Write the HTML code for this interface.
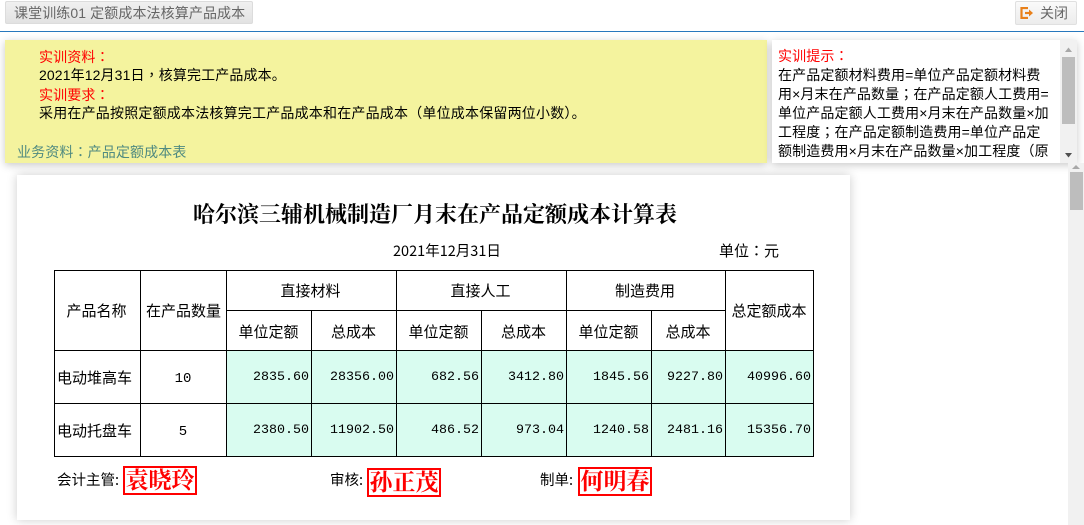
<!DOCTYPE html>
<html lang="zh-CN"><head><meta charset="utf-8">
<style>
html,body{margin:0;padding:0;width:1084px;height:525px;overflow:hidden;background:#fff}
body{position:relative;font-family:"Liberation Sans","WenQuanYi Zen Hei","Noto Sans CJK SC",sans-serif;font-size:14px;color:#000}
.a{position:absolute;white-space:nowrap}
.h{position:absolute;background:#000;height:1px}
.v{position:absolute;background:#000;width:1px}
.c{position:absolute;background:#d9fcf0}
.t{position:absolute;text-align:center;white-space:nowrap;line-height:20px;height:20px;font-family:"WenQuanYi Zen Hei","Noto Sans CJK SC",sans-serif;font-size:15px;color:#000}
.n{position:absolute;text-align:right;white-space:nowrap;line-height:20px;height:20px;font-family:"Liberation Mono","WenQuanYi Zen Hei",monospace;font-size:13.330px;color:#000}
.s{position:absolute;border:2px solid #f00;color:#f00;font-family:"Liberation Serif","Noto Serif CJK SC",serif;font-weight:bold;font-size:23px;line-height:25px;height:25px;width:70px;text-align:center;background:#fff;white-space:nowrap}
.y{line-height:19px;font-size:14px;letter-spacing:.12px}
.p{font-family:"Noto Sans CJK TC",sans-serif;line-height:1}
</style></head><body>

<div class="a" style="left:5px;top:1px;width:248px;height:23px;box-sizing:border-box;border:1px solid #dcdcdc;border-radius:2px;background:linear-gradient(#f0f0f0,#e2e2e2);color:#666;font-size:14px;line-height:22px;padding-left:8px;letter-spacing:.1px">课堂训练01 定额成本法核算产品成本</div>

<div class="a" style="left:1015px;top:1px;width:62px;height:24px;box-sizing:border-box;border:1px solid #e0e0e0;border-radius:2px;background:linear-gradient(#fafafa,#ececec);color:#666;font-size:14px;line-height:22px;padding-left:24px">关闭</div>
<svg class="a" style="left:1020px;top:7px" width="14" height="12" viewBox="0 0 14 12"><path d="M8 1H1.500V11H8" fill="none" stroke="#e8801a" stroke-width="2.200"/><path d="M5 6H10" stroke="#e8801a" stroke-width="2.200"/><path d="M9 2.500L13 6L9 9.500Z" fill="#e8801a"/></svg>

<div class="a" style="left:0;top:31px;width:1084px;height:1px;background:#2878bd"></div>

<div class="a" style="left:5px;top:40px;width:762px;height:123px;background:#f4f39e;box-shadow:0 2px 8px rgba(0,0,0,.22)"></div>
<div class="a y" style="left:39px;top:48px;color:#f00">实训资料<span class="p" lang="zh-TW">：</span></div>
<div class="a y" style="left:39px;top:66px">2021年12月31日<span class="p" lang="zh-TW">，</span>核算完工产品成本。</div>
<div class="a y" style="left:39px;top:86px;color:#f00">实训要求<span class="p" lang="zh-TW">：</span></div>
<div class="a y" style="left:39px;top:104px;letter-spacing:.2px">采用在产品按照定额成本法核算完工产品成本和在产品成本<span class="p" lang="zh-TW">（</span>单位成本保留两位小数<span class="p" lang="zh-TW">）</span>。</div>
<div class="a y" style="left:17px;top:143px;color:#4f8a80">业务资料<span class="p" lang="zh-TW">：</span>产品定额成本表</div>

<div class="a" style="left:772px;top:40px;width:305px;height:123px;background:#fff;box-shadow:0 2px 8px rgba(0,0,0,.22);overflow:hidden">
<div class="a y" style="left:6px;top:7px;color:#f00">实训提示<span class="p" lang="zh-TW">：</span></div>
<div class="a y" style="left:6px;top:26px">在产品定额材料费用=单位产品定额材料费</div>
<div class="a y" style="left:6px;top:45px">用×月末在产品数量<span class="p" lang="zh-TW">；</span>在产品定额人工费用=</div>
<div class="a y" style="left:6px;top:64px">单位产品定额人工费用×月末在产品数量×加</div>
<div class="a y" style="left:6px;top:83px">工程度<span class="p" lang="zh-TW">；</span>在产品定额制造费用=单位产品定</div>
<div class="a y" style="left:6px;top:102px">额制造费用×月末在产品数量×加工程度<span class="p" lang="zh-TW">（</span>原</div>
<div class="a" style="left:288px;top:0;width:17px;height:123px;background:#f1f1f1"></div>
<div class="a" style="left:290px;top:17px;width:13px;height:67px;background:#bdbdbd"></div>
<svg class="a" style="left:288px;top:0" width="17" height="123"><path d="M5 12L8.500 7.500L12 12Z" fill="#a8a8a8"/><path d="M5 113L8.500 117.500L12 113Z" fill="#505050"/></svg>
</div>

<div class="a" style="left:1068px;top:163px;width:16px;height:362px;background:#f1f1f1"></div>
<div class="a" style="left:1070px;top:172px;width:13px;height:38px;background:#bdbdbd"></div>
<svg class="a" style="left:1068px;top:163px" width="16" height="10"><path d="M4 6L8 2L12 6Z" fill="#a8a8a8"/></svg>

<div class="a" style="left:17px;top:175px;width:833px;height:345px;background:#fff;box-shadow:0 0 10px rgba(0,0,0,.2)"></div>

<div class="a" style="left:17px;top:202px;width:836px;text-align:center;font-family:'Liberation Serif','Noto Serif CJK SC',serif;font-weight:bold;font-size:22px;line-height:26px;color:#000">哈尔滨三辅机械制造厂月末在产品定额成本计算表</div>

<div class="t" style="left:393px;top:241px;font-size:14.500px">2021年12月31日</div>
<div class="t" style="left:719px;top:241px">单位<span class="p" lang="zh-TW">：</span>元</div>

<div class="c" style="left:227px;top:351px;width:586px;height:105px"></div>

<div class="h" style="left:54px;top:270px;width:760px"></div>
<div class="h" style="left:226px;top:310px;width:499px"></div>
<div class="h" style="left:54px;top:350px;width:760px"></div>
<div class="h" style="left:54px;top:403px;width:760px"></div>
<div class="h" style="left:54px;top:456px;width:760px"></div>
<div class="v" style="left:54px;top:270px;height:187px"></div>
<div class="v" style="left:140px;top:270px;height:187px"></div>
<div class="v" style="left:226px;top:270px;height:187px"></div>
<div class="v" style="left:311px;top:310px;height:147px"></div>
<div class="v" style="left:396px;top:270px;height:187px"></div>
<div class="v" style="left:481px;top:310px;height:147px"></div>
<div class="v" style="left:566px;top:270px;height:187px"></div>
<div class="v" style="left:651px;top:310px;height:147px"></div>
<div class="v" style="left:725px;top:270px;height:187px"></div>
<div class="v" style="left:813px;top:270px;height:187px"></div>

<div class="t" style="left:53px;top:301px;width:87px">产品名称</div>
<div class="t" style="left:140px;top:301px;width:87px">在产品数量</div>
<div class="t" style="left:225px;top:281px;width:171px">直接材料</div>
<div class="t" style="left:395px;top:281px;width:171px">直接人工</div>
<div class="t" style="left:565px;top:281px;width:160px">制造费用</div>
<div class="t" style="left:725px;top:301px;width:88px">总定额成本</div>
<div class="t" style="left:226px;top:322px;width:85px">单位定额</div>
<div class="t" style="left:311px;top:322px;width:85px">总成本</div>
<div class="t" style="left:396px;top:322px;width:85px">单位定额</div>
<div class="t" style="left:481px;top:322px;width:85px">总成本</div>
<div class="t" style="left:566px;top:322px;width:85px">单位定额</div>
<div class="t" style="left:651px;top:322px;width:74px">总成本</div>

<div class="t" style="left:52px;top:368px;width:85px">电动堆高车</div>
<div class="t" style="left:52px;top:421px;width:85px">电动托盘车</div>
<div class="n" style="left:140px;top:369px;width:86px;text-align:center;font-size:14px">10</div>
<div class="n" style="left:140px;top:422px;width:86px;text-align:center;font-size:14px">5</div>

<div class="n" style="left:226px;top:368px;width:83px">2835.60</div>
<div class="n" style="left:311px;top:368px;width:83px">28356.00</div>
<div class="n" style="left:396px;top:368px;width:83px">682.56</div>
<div class="n" style="left:481px;top:368px;width:83px">3412.80</div>
<div class="n" style="left:566px;top:368px;width:83px">1845.56</div>
<div class="n" style="left:651px;top:368px;width:72px">9227.80</div>
<div class="n" style="left:725px;top:368px;width:86px">40996.60</div>

<div class="n" style="left:226px;top:421px;width:83px">2380.50</div>
<div class="n" style="left:311px;top:421px;width:83px">11902.50</div>
<div class="n" style="left:396px;top:421px;width:83px">486.52</div>
<div class="n" style="left:481px;top:421px;width:83px">973.04</div>
<div class="n" style="left:566px;top:421px;width:83px">1240.58</div>
<div class="n" style="left:651px;top:421px;width:72px">2481.16</div>
<div class="n" style="left:725px;top:421px;width:86px">15356.70</div>

<div class="t" style="left:57px;top:470px;font-size:14.500px">会计主管:</div>
<div class="s" style="left:123px;top:466px">袁晓玲</div>
<div class="t" style="left:330px;top:470px;font-size:14.500px">审核:</div>
<div class="s" style="left:367px;top:468px">孙正茂</div>
<div class="t" style="left:540px;top:470px;font-size:14.500px">制单:</div>
<div class="s" style="left:578px;top:467px">何明春</div>

</body></html>
